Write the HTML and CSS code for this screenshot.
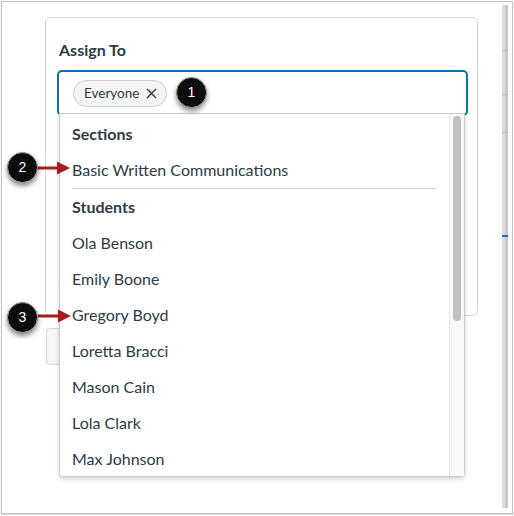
FILE: index.html
```html
<!DOCTYPE html>
<html>
<head>
<meta charset="utf-8">
<link rel="stylesheet" href="styles.css">
</head>
<body>
<div class="frame">
  <div class="main">
    <div class="card">
      <div class="label">Assign To</div>
      <div class="input">
        <span class="chip">Everyone
          <svg class="chip-x" width="11" height="11" viewBox="0 0 11 11"><path d="M1 1 L10 10 M10 1 L1 10" stroke="#2d3b45" stroke-width="1.4" fill="none"/></svg>
        </span>
        <div class="dropdown">
          <div class="list">
            <div class="group">Sections</div>
            <div class="item">Basic Written Communications</div>
            <div class="divider"></div>
            <div class="group">Students</div>
            <div class="item">Ola Benson</div>
            <div class="item">Emily Boone</div>
            <div class="item">Gregory Boyd</div>
            <div class="item">Loretta Bracci</div>
            <div class="item">Mason Cain</div>
            <div class="item">Lola Clark</div>
            <div class="item">Max Johnson</div>
          </div>
          <div class="track"><div class="thumb"></div></div>
        </div>
      </div>
    </div>
    <div class="button"></div>
  </div>
  <div class="bar">
    <div class="tick t1"></div>
    <div class="tick t2"></div>
    <div class="tick t3"></div>
    <div class="tick blue"></div>
  </div>

  <div class="badge b1">1</div>
  <div class="badge b2">2</div>
  <div class="badge b3">3</div>
  <svg class="arrow a2" width="34" height="14" viewBox="0 0 34 14"><rect x="0" y="5.5" width="22" height="3" fill="#a51d1d"/><path d="M20 0.5 L33 7 L20 13.5 Z" fill="#a51d1d"/></svg>
  <svg class="arrow a3" width="34" height="14" viewBox="0 0 34 14"><rect x="0" y="5.5" width="22" height="3" fill="#a51d1d"/><path d="M20 0.5 L33 7 L20 13.5 Z" fill="#a51d1d"/></svg>
</div>
</body>
</html>
```

FILE: styles.css
```css
* { box-sizing: border-box; }
html, body { margin: 0; padding: 0; background: #fff; }
body { font-family: Lato, "Open Sans", "Liberation Sans", sans-serif; color: #2d3b45; }

.frame {
  position: relative;
  margin: 1px;
  width: 512px;
  height: 513px;
  border: 1px solid #c4c4c4;
  box-shadow: 0 1px 1px rgba(0,0,0,0.15);
  display: flex;
  padding: 3px 4px 5px 0;
  background: #fff;
}
.main { flex: 1; }
.card {
  margin: 12px 0 0 43px;
  width: 433px;
  height: 299px;
  border: 1px solid #d2d6d9;
  border-radius: 5px;
  padding: 22px 11px 0 11px;
}
.label {
  font-weight: 700;
  font-size: 16px;
  line-height: 20px;
  margin: 0 0 10px 2px;
}
.input {
  position: relative;
  width: 411px;
  height: 46px;
  border: 2px solid #0a72b0;
  border-radius: 5px;
  display: flex;
  align-items: center;
  padding-left: 14px;
}
.chip {
  display: inline-flex;
  align-items: center;
  height: 27px;
  padding: 0 9px 0 10px;
  border: 1px solid #c7cdd1;
  border-radius: 14px;
  background: #f3f4f4;
  font-size: 13.5px;
  gap: 7px;
}
.chip-x { display: block; }
.dropdown {
  position: absolute;
  top: 41px;
  left: 0;
  width: 406px;
  height: 364px;
  background: #fff;
  border: 1px solid #c7cdd1;
  border-radius: 0 0 4px 4px;
  box-shadow: 0 2px 4px rgba(0,0,0,0.18);
  display: flex;
  z-index: 2;
}
.list { flex: 1; padding-top: 2px; }
.group, .item {
  height: 36px;
  line-height: 36px;
  padding-left: 12px;
  font-size: 16px;
  white-space: nowrap;
}
.group { font-weight: 700; }
.divider { height: 1px; background: #d2d6d9; margin: 0 12px; }
.track {
  width: 15px;
  background: #fafafa;
  border-left: 1px solid #e8e8e8;
  padding: 2px 0 0 3px;
}
.thumb {
  width: 8px;
  height: 205px;
  border-radius: 4px;
  background: #c1c1c1;
}
.button {
  margin: 12px 0 0 44px;
  width: 60px;
  height: 37px;
  border: 1px solid #d2d6d9;
  border-radius: 4px;
  background: #f5f5f5;
}
.bar {
  position: relative;
  width: 6px;
  background: linear-gradient(to right, #dedede 0, #dedede 3px, #c8c8c8 3px);
}
.tick { position: absolute; left: 0; width: 6px; height: 1px; background: #bdbdbd; }
.t1 { top: 45px; }
.t2 { top: 89px; }
.t3 { top: 127px; }
.tick.blue { top: 230px; height: 2px; background: #1f6fb0; }

.badge {
  position: absolute;
  width: 31px;
  height: 31px;
  border-radius: 50%;
  background: #0d0d0d;
  color: #fff;
  font-family: "Liberation Sans", Arial, sans-serif;
  font-size: 14px;
  line-height: 29px;
  text-align: center;
  box-shadow: 0 3px 5px rgba(0,0,0,0.45);
  border: 1px solid #9a9a9a;
  z-index: 5;
}
.b1 { left: 174px; top: 75px; }
.b2 { left: 5px; top: 150px; }
.b3 { left: 5px; top: 300px; }
.arrow { position: absolute; z-index: 4; }
.a2 { left: 35px; top: 159px; }
.a3 { left: 36px; top: 307px; }
```
